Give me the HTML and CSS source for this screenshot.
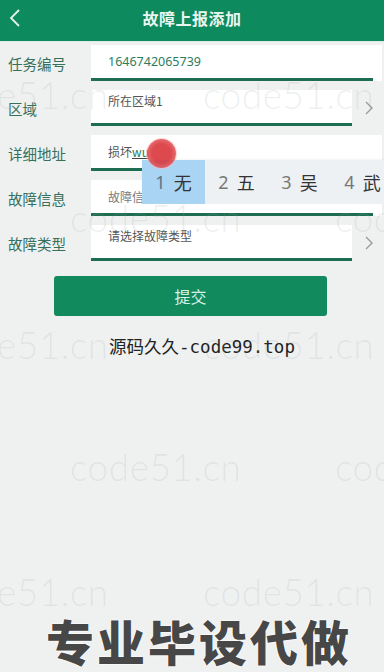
FILE: index.html
```html
<!DOCTYPE html>
<html lang="zh-CN">
<head>
<meta charset="utf-8">
<title>故障上报添加</title>
<link rel="stylesheet" href="styles.css">
</head>
<body>
<div class="page">
  <header class="topbar">
    <svg class="back" width="14" height="20" viewBox="0 0 14 20"><path d="M11 2 L3 10 L11 18" fill="none" stroke="#e6f4ee" stroke-width="1.8"/></svg>
    <h1 class="title">故障上报添加</h1>
  </header>

  <main class="form">
    <div class="row">
      <div class="label">任务编号</div>
      <div class="field field-full">
        <div class="value value-green">1646742065739</div>
        <div class="line line-short"></div>
      </div>
    </div>
    <div class="row">
      <div class="label">区域</div>
      <div class="field field-select">
        <div class="value value-top">所在区域1</div>
        <div class="line"></div>
      </div>
      <div class="chev"><svg width="12" height="16" viewBox="0 0 12 16"><path d="M3 2 L9 8 L3 14" fill="none" stroke="#9a9a9a" stroke-width="1.4"/></svg></div>
    </div>
    <div class="row">
      <div class="label">详细地址</div>
      <div class="field field-full">
        <div class="value">损坏<span class="compose">wu</span></div>
        <div class="line line-short"></div>
      </div>
    </div>
    <div class="row">
      <div class="label">故障信息</div>
      <div class="field field-full">
        <div class="value value-gray">故障信息</div>
        <div class="line line-short"></div>
      </div>
    </div>
    <div class="row">
      <div class="label">故障类型</div>
      <div class="field field-select">
        <div class="value value-top">请选择故障类型</div>
        <div class="line"></div>
      </div>
      <div class="chev"><svg width="12" height="16" viewBox="0 0 12 16"><path d="M3 2 L9 8 L3 14" fill="none" stroke="#9a9a9a" stroke-width="1.4"/></svg></div>
    </div>

    <button class="submit">提交</button>
    <p class="caption">源码久久-code99.top</p>
  </main>

  <div class="ime">
    <div class="cand cand-on"><span class="num">1</span>无</div>
    <div class="cand"><span class="num">2</span>五</div>
    <div class="cand"><span class="num">3</span>吴</div>
    <div class="cand"><span class="num">4</span>武</div>
  </div>
  <div class="touch"></div>

  <div class="wm wm1">e51.cn</div>
  <div class="wm wm2">code51.cn</div>
  <div class="wm wm3">code51.cn</div>
  <div class="wm wm4">code51.cn</div>
  <div class="wm wm5">e51.cn</div>
  <div class="wm wm6">code51.cn</div>
  <div class="wm wm7">code51.cn</div>
  <div class="wm wm8">code51.cn</div>
  <div class="wm wm9">e51.cn</div>
  <div class="wm wm10">code51.cn</div>

  <div class="promo">专业毕设代做</div>
</div>
</body>
</html>
```
FILE: styles.css
```css
* { box-sizing: border-box; }
html, body { margin: 0; padding: 0; }
body {
  width: 384px;
  height: 672px;
  overflow: hidden;
  background: #eff1f1;
  font-family: "Noto Sans CJK SC", "Noto Sans", sans-serif;
}
.page {
  position: relative;
  width: 384px;
  height: 672px;
  overflow: hidden;
}
.topbar {
  height: 42px;
  background: #0d8a5e;
  border-bottom: 1px solid #dfe9e5;
  display: flex;
  align-items: center;
  justify-content: center;
  position: relative;
}
.back {
  position: absolute;
  left: 8px;
  top: 8px;
}
.title {
  margin: -6px 0 0;
  font-size: 16px;
  font-weight: 700;
  color: #e9f6f0;
  letter-spacing: 0.5px;
}
.form {
  display: flex;
  flex-direction: column;
}
.row {
  display: flex;
  align-items: flex-start;
  height: 45px;
  padding-top: 3px;
}
.label {
  width: 91px;
  height: 36px;
  padding-left: 8px;
  display: flex;
  align-items: center;
  font-size: 14.5px;
  color: #36705c;
}
.field {
  height: 36px;
  background: #fff;
  display: flex;
  flex-direction: column;
  justify-content: space-between;
}
.field-full {
  flex: 1;
  margin-right: 2px;
}
.field-select {
  width: 261px;
}
.value {
  flex: 1;
  display: flex;
  align-items: center;
  padding-left: 17px;
  font-size: 12px;
  color: #555;
  white-space: nowrap;
}
.value-top {
  align-items: flex-start;
  padding-top: 2px;
}
.value-green { color: #2c7c60; font-family: "Noto Sans", sans-serif; font-size: 12.5px; }
.value-gray { color: #7a7a7a; }
.compose {
  color: #2c7c60;
  text-decoration: underline;
  text-decoration-color: #444;
}
.line {
  height: 3px;
  background: #1d6e51;
}
.line-short {
  margin-right: 9px;
}
.chev {
  flex: 1;
  height: 36px;
  display: flex;
  align-items: center;
  justify-content: center;
  padding-left: 2px;
}
.submit {
  margin: 9px 0 0 54px;
  width: 273px;
  height: 40px;
  border: 0;
  border-radius: 3px;
  background: #118a5e;
  color: #d8f1e6;
  font-family: "Noto Sans CJK SC", sans-serif;
  font-size: 16px;
  padding: 0;
}
.caption {
  margin: 19px 0 0;
  padding-left: 20px;
  text-align: center;
  font-family: "DejaVu Sans Mono", "Noto Sans CJK SC", monospace;
  font-size: 17.5px;
  color: #222;
  line-height: 24px;
}
.ime {
  position: absolute;
  left: 142px;
  top: 160px;
  width: 242px;
  height: 44px;
  background: #eef1f4;
  display: flex;
  box-shadow: 0 -1px 2px rgba(0,0,0,0.05);
}
.cand {
  width: 63px;
  display: flex;
  align-items: center;
  justify-content: center;
  font-size: 18px;
  color: #333;
  flex-shrink: 0;
}
.cand-on { background: #a9d4f4; }
.num {
  color: #777;
  margin-right: 8px;
  font-family: "Noto Sans", sans-serif;
}
.cand-on .num { color: #5c7486; }
.touch {
  position: absolute;
  left: 147px;
  top: 139px;
  width: 29px;
  height: 29px;
  border-radius: 50%;
  background: radial-gradient(circle, #d9363c 0 45%, #e4585c 70%, #f08d90 100%);
  opacity: 0.9;
  box-shadow: 0 0 0 1px rgba(255,190,190,0.7);
}
.wm {
  position: absolute;
  font-family: "Lato", "Open Sans", sans-serif;
  font-weight: 300;
  font-size: 37px;
  letter-spacing: 0.5px;
  color: rgba(150,155,155,0.16);
  line-height: 40px;
  white-space: nowrap;
  pointer-events: none;
}
.wm1 { left: -3px; top: 75px; }
.wm2 { left: 203px; top: 75px; }
.wm3 { left: 70px; top: 198px; }
.wm4 { left: 335px; top: 198px; }
.wm5 { left: -3px; top: 325px; }
.wm6 { left: 203px; top: 325px; }
.wm7 { left: 70px; top: 447px; }
.wm8 { left: 335px; top: 447px; }
.wm9 { left: -3px; top: 572px; }
.wm10 { left: 203px; top: 572px; }
.promo {
  position: absolute;
  left: 0;
  right: 0;
  top: 610px;
  padding-left: 14px;
  text-align: center;
  font-family: "Noto Sans CJK SC", sans-serif;
  font-weight: 900;
  font-size: 48px;
  line-height: 60px;
  color: #474747;
  letter-spacing: 3px;
  text-shadow: 0 0 2px #fff, 0 0 2px #fff, 0 0 1px #fff;
}
```
